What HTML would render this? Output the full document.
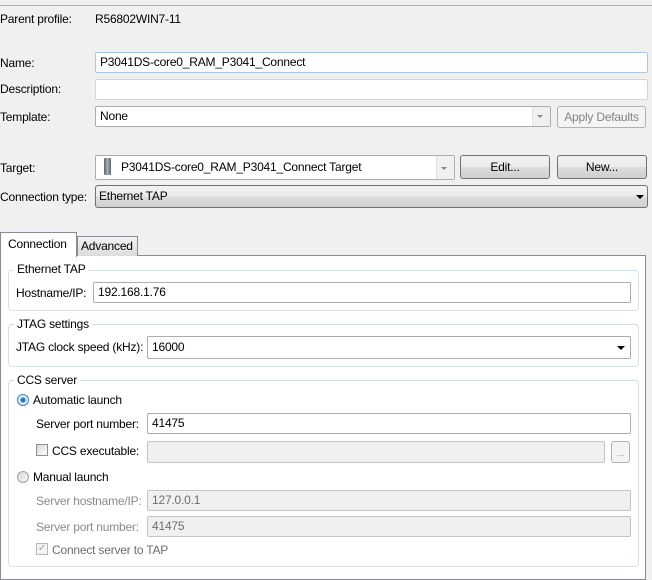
<!DOCTYPE html>
<html><head><style>
*{box-sizing:border-box;margin:0;padding:0}
body{width:652px;height:580px;background:#f0f0f0;font-family:"Liberation Sans",sans-serif;font-size:12px;letter-spacing:-0.2px;color:#000;position:relative;overflow:hidden}
.a{position:absolute;white-space:nowrap}
.in{position:absolute;background:#fff;border:1px solid #abadb3;border-top-color:#abadb3;border-radius:2px;padding:0 4px;line-height:18px;white-space:nowrap}
.dis{background:#f0f0f0;border-color:#c5c5c5;color:#6d6d6d}
.btn{position:absolute;border:1px solid #707070;border-radius:3px;background:linear-gradient(#f2f2f2,#ebebeb 50%,#dddddd 50%,#cfcfcf);text-align:center;line-height:20px}
.grp{position:absolute;border:1px solid #d5dfe5;border-radius:4px}
.gt{position:absolute;background:#fff;padding:0 3px;line-height:14px}
.g{color:#8a8a8a}
.arr{position:absolute;width:0;height:0;border-left:4px solid transparent;border-right:4px solid transparent;border-top:4px solid #000}
</style></head><body>
<div class="a" style="left:0;top:5px;width:652px;height:1px;background:#b0b0b0"></div>
<div class="a" style="left:0;top:12px">Parent profile:</div>
<div class="a" style="left:95px;top:12px">R56802WIN7-11</div>

<div class="a" style="left:0;top:56px">Name:</div>
<div class="in" style="left:95px;top:52px;width:553px;height:21px;border-color:#a8c8e8">P3041DS-core0_RAM_P3041_Connect</div>
<div class="a" style="left:0;top:82px">Description:</div>
<div class="in" style="left:95px;top:79px;width:553px;height:21px;border-color:#c8d8e8"></div>
<div class="a" style="left:0;top:110px">Template:</div>
<div class="in" style="left:95px;top:106px;width:456px;height:21px">None</div>
<div class="a" style="left:532px;top:107px;width:18px;height:19px;background:#f0f0f0;border-left:1px solid #e0e0e0"></div>
<div class="arr" style="left:537px;top:115px;border-top-color:#888;border-left-width:3px;border-right-width:3px;border-top-width:3px"></div>
<div class="btn" style="left:557px;top:106px;width:89px;height:22px;border-color:#adb2b5;background:#f4f4f4;color:#838383">Apply Defaults</div>

<div class="a" style="left:0;top:161px">Target:</div>
<div class="in" style="left:95px;top:155px;width:360px;height:25px;line-height:23px;padding-left:25px">P3041DS-core0_RAM_P3041_Connect Target</div>
<div class="a" style="left:104px;top:158px;width:7px;height:17px;background:linear-gradient(90deg,#5a6470,#a8b0b8,#5a6470);border-radius:1px"></div>
<div class="a" style="left:436px;top:156px;width:18px;height:23px;background:#f0f0f0;border-left:1px solid #e0e0e0"></div>
<div class="arr" style="left:441px;top:167px;border-top-color:#888;border-left-width:3px;border-right-width:3px;border-top-width:3px"></div>
<div class="btn" style="left:460px;top:155px;width:90px;height:24px;line-height:22px">Edit...</div>
<div class="btn" style="left:557px;top:155px;width:90px;height:24px;line-height:22px">New...</div>

<div class="a" style="left:0;top:190px">Connection type:</div>
<div class="btn" style="left:95px;top:185px;width:553px;height:23px;text-align:left;padding-left:3px;line-height:21px">Ethernet TAP</div>
<div class="arr" style="left:636px;top:195px"></div>

<div class="a" style="left:0;top:255px;width:646px;height:325px;background:#fff;border:1px solid #898c95"></div>
<div class="a" style="left:77px;top:236px;width:61px;height:20px;background:linear-gradient(#f2f2f2,#dcdcdc);border:1px solid #898c95;border-bottom:none;padding-left:3px;line-height:19px">Advanced</div>
<div class="a" style="left:0;top:232px;width:77px;height:25px;background:#fff;border:1px solid #898c95;border-bottom:none;padding-left:7px;line-height:22px">Connection</div>

<div class="grp" style="left:8px;top:270px;width:631px;height:41px"></div>
<div class="gt" style="left:14px;top:262px">Ethernet TAP</div>
<div class="a" style="left:16px;top:286px">Hostname/IP:</div>
<div class="in" style="left:93px;top:282px;width:538px;height:21px">192.168.1.76</div>

<div class="grp" style="left:8px;top:324px;width:631px;height:43px"></div>
<div class="gt" style="left:14px;top:317px">JTAG settings</div>
<div class="a" style="left:16px;top:340px">JTAG clock speed (kHz):</div>
<div class="in" style="left:147px;top:336px;width:484px;height:23px;line-height:21px">16000</div>
<div class="arr" style="left:617px;top:346px"></div>

<div class="grp" style="left:8px;top:380px;width:631px;height:187px"></div>
<div class="gt" style="left:14px;top:373px">CCS server</div>
<div class="a" style="left:17px;top:394px;width:12px;height:12px;border-radius:50%;border:1px solid #3c7fb1;background:radial-gradient(circle,#1a5a9a 0,#3d8ad0 2px,#e8f2fa 3.5px)"></div>
<div class="a" style="left:33px;top:393px">Automatic launch</div>
<div class="a" style="left:36px;top:417px">Server port number:</div>
<div class="in" style="left:147px;top:413px;width:484px;height:21px">41475</div>
<div class="a" style="left:36px;top:444px;width:12px;height:12px;border:1px solid #8f8f8f;background:linear-gradient(135deg,#dcdcdc,#fafafa)"></div>
<div class="a" style="left:52px;top:444px">CCS executable:</div>
<div class="in dis" style="left:147px;top:441px;width:458px;height:22px"></div>
<div class="btn" style="left:611px;top:441px;width:19px;height:22px;border-color:#adb2b5;background:#f4f4f4;color:#999;line-height:24px;font-size:10px">...</div>
<div class="a" style="left:17px;top:471px;width:12px;height:12px;border-radius:50%;border:1px solid #a0a0a0;background:linear-gradient(135deg,#d8d8d8,#f8f8f8)"></div>
<div class="a" style="left:33px;top:470px">Manual launch</div>
<div class="a g" style="left:36px;top:494px">Server hostname/IP:</div>
<div class="in dis" style="left:147px;top:490px;width:484px;height:21px">127.0.0.1</div>
<div class="a g" style="left:36px;top:520px">Server port number:</div>
<div class="in dis" style="left:147px;top:516px;width:484px;height:21px">41475</div>
<div class="a" style="left:36px;top:543px;width:12px;height:12px;border:1px solid #b8b8b8;background:#f4f4f4;color:#9a9a9a;font-size:10px;line-height:10px;text-align:center">✓</div>
<div class="a g" style="left:52px;top:543px;color:#6d6d6d">Connect server to TAP</div>
</body></html>
